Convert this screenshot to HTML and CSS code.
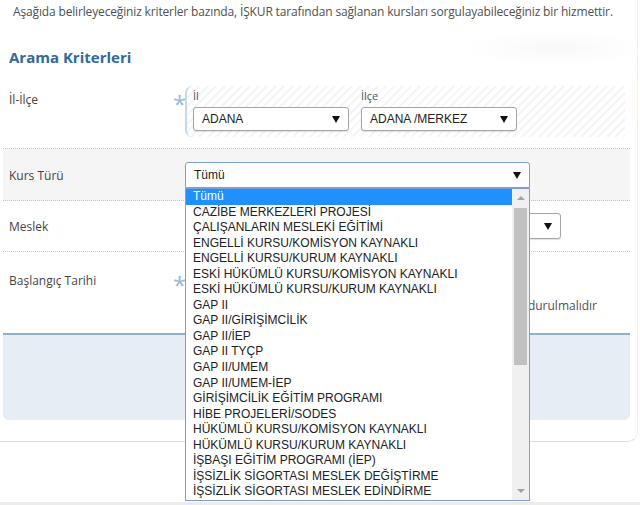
FILE: index.html
```html
<!DOCTYPE html>
<html lang="tr">
<head>
    <meta charset="UTF-8">
    <title>Kurs Sorgulama</title>
    <link rel="stylesheet" href="styles.css">
</head>
<body>
<div class="page">
    <p class="intro">Aşağıda belirleyeceğiniz kriterler bazında, İŞKUR tarafından sağlanan kursları sorgulayabileceğiniz bir hizmettir.</p>

    <h3 class="criteria-title">Arama Kriterleri</h3>

    <div class="form-row row-city">
        <div class="row-label">İl-İlçe</div>
        <div class="req">*</div>
        <div class="row-field">
            <div class="pair-box">
                <div class="pair-item">
                    <div class="small-label">İl</div>
                    <div class="select-box select-city">ADANA<span class="arrow"></span></div>
                </div>
                <div class="pair-item">
                    <div class="small-label">İlçe</div>
                    <div class="select-box select-city">ADANA /MERKEZ<span class="arrow"></span></div>
                </div>
            </div>
        </div>
    </div>

    <div class="form-row row-alt">
        <div class="row-label">Kurs Türü</div>
        <div class="req"></div>
        <div class="row-field">
            <div class="select-box select-course focused">Tümü<span class="arrow"></span>
                <!-- open dropdown -->
                <div class="dropdown">
                    <ul class="options">
                        <li class="selected">Tümü</li>
                        <li>CAZİBE MERKEZLERİ PROJESİ</li>
                        <li>ÇALIŞANLARIN MESLEKİ EĞİTİMİ</li>
                        <li>ENGELLİ KURSU/KOMİSYON KAYNAKLI</li>
                        <li>ENGELLİ KURSU/KURUM KAYNAKLI</li>
                        <li>ESKİ HÜKÜMLÜ KURSU/KOMİSYON KAYNAKLI</li>
                        <li>ESKİ HÜKÜMLÜ KURSU/KURUM KAYNAKLI</li>
                        <li>GAP II</li>
                        <li>GAP II/GİRİŞİMCİLİK</li>
                        <li>GAP II/İEP</li>
                        <li>GAP II TYÇP</li>
                        <li>GAP II/UMEM</li>
                        <li>GAP II/UMEM-İEP</li>
                        <li>GİRİŞİMCİLİK EĞİTİM PROGRAMI</li>
                        <li>HİBE PROJELERİ/SODES</li>
                        <li>HÜKÜMLÜ KURSU/KOMİSYON KAYNAKLI</li>
                        <li>HÜKÜMLÜ KURSU/KURUM KAYNAKLI</li>
                        <li>İŞBAŞI EĞİTİM PROGRAMI (İEP)</li>
                        <li>İŞSİZLİK SİGORTASI MESLEK DEĞİŞTİRME</li>
                        <li>İŞSİZLİK SİGORTASI MESLEK EDİNDİRME</li>
                    </ul>
                    <div class="scrollbar">
                        <span class="scroll-up"></span>
                        <span class="scroll-thumb"></span>
                        <span class="scroll-down"></span>
                    </div>
                </div>
            </div>
        </div>
    </div>

    <div class="form-row">
        <div class="row-label">Meslek</div>
        <div class="req"></div>
        <div class="row-field">
            <div class="select-box select-job"><span class="arrow"></span></div>
        </div>
    </div>

    <div class="form-row row-date">
        <div class="row-label">Başlangıç Tarihi</div>
        <div class="req">*</div>
        <div class="row-field">
            <div class="date-note">durulmalıdır</div>
        </div>
    </div>

    <div class="actions"></div>
</div>
<div class="footer"></div>
</body>
</html>
```

FILE: styles.css
```css
body {
    margin: 0;
    font-family: "Open Sans", "Noto Sans", sans-serif;
    font-size: 12px;
    color: #505050;
    background-color: #fff;
    background-image:
        radial-gradient(ellipse 90px 18px at 555px 48px, rgba(200, 200, 200, 0.12), rgba(255, 255, 255, 0)),
        radial-gradient(circle 40px at 668px 100px, rgba(255, 232, 150, 0.3), rgba(255, 255, 255, 0));
    background-repeat: no-repeat;
}

.page {
    width: 627px;
    padding: 0 7px 21px 3px;
    border-right: 1px solid #eef2f5;
    border-bottom: 1px solid #d8e1e9;
    border-bottom-right-radius: 10px;
}

.intro {
    margin: 0;
    padding: 4px 0 0 10px;
    line-height: 16px;
    letter-spacing: -0.15px;
}

.criteria-title {
    margin: 27px 0 11px;
    padding-left: 6px;
    font-size: 15px;
    line-height: 20px;
    color: #2f6a9a;
}

.form-row {
    display: flex;
    align-items: flex-start;
    padding: 12px 0;
    border-bottom: 1px dotted #c8c8c8;
}

.row-city {
    padding: 8px 0 11px;
}

.row-alt {
    padding: 13px 0 12px;
    background-color: #f5f5f5;
}

.row-date {
    height: 81px;
    padding: 0;
    border-bottom: none;
}

.row-label {
    width: 164px;
    padding: 6px 0 0 6px;
    line-height: 16px;
    color: #444;
}

.row-date .row-label {
    margin-top: 15px;
}

.req {
    width: 12px;
    padding-top: 7px;
    font-size: 24px;
    line-height: 22px;
    color: #98b9d6;
}

.row-date .req {
    margin-top: 15px;
}

.row-field {
    flex: 1;
}

.pair-box {
    display: flex;
    gap: 12px;
    width: 432px;
    height: 51px;
    padding-left: 6px;
    border-left: 2px solid #c7d8e8;
    border-radius: 7px 0 0 7px;
    background: repeating-linear-gradient(-45deg, #f3f5f7 0 2px, #fff 2px 6px);
}

.small-label {
    padding-top: 3px;
    height: 18px;
    font-size: 11px;
    line-height: 14px;
    color: #555;
}

.select-box {
    position: relative;
    box-sizing: border-box;
    height: 26px;
    padding-left: 8px;
    border: 1px solid #a6a6a6;
    border-radius: 3px;
    background: #fff;
    font-family: "Liberation Sans", Arial, sans-serif;
    font-size: 12px;
    line-height: 24px;
    color: #222;
    box-shadow: 0 1px 1px rgba(0, 0, 0, 0.12);
}

.select-city {
    width: 156px;
    height: 24px;
    line-height: 22px;
}

.select-course {
    width: 345px;
}

.select-job {
    width: 376px;
}

.focused {
    border-color: #7d9fd3;
    border-radius: 3px 3px 0 0;
    box-shadow: none;
}

.arrow {
    position: absolute;
    right: 8px;
    top: 50%;
    margin-top: -3px;
    border-left: 4px solid transparent;
    border-right: 4px solid transparent;
    border-top: 7px solid #111;
}

.dropdown {
    position: absolute;
    left: -1px;
    top: 25px;
    width: 345px;
    box-sizing: border-box;
    display: flex;
    border: 1px solid #7d9fd3;
    background: #fff;
    z-index: 5;
}

.options {
    flex: 1;
    margin: 0;
    padding: 0;
    list-style: none;
    line-height: 15.55px;
    color: #222;
}

.options li {
    padding-left: 7px;
    white-space: nowrap;
}

.options li.selected {
    background-color: #1e90ff;
    color: #fff;
}

.scrollbar {
    position: relative;
    width: 17px;
    background-color: #f0f0f0;
}

.scroll-up,
.scroll-down {
    position: absolute;
    left: 5px;
    border-left: 4px solid transparent;
    border-right: 4px solid transparent;
}

.scroll-up {
    top: 7px;
    border-bottom: 4px solid #a3a3a3;
}

.scroll-down {
    bottom: 7px;
    border-top: 4px solid #a3a3a3;
}

.scroll-thumb {
    position: absolute;
    left: 2px;
    top: 19px;
    width: 13px;
    height: 157px;
    background-color: #c1c1c1;
}

.date-note {
    margin-top: 46px;
    padding-right: 33px;
    text-align: right;
    line-height: 16px;
}

.actions {
    height: 85px;
    border-top: 2px solid #8fb0ce;
    border-radius: 0 0 6px 6px;
    background-color: #e6edf4;
}

.footer {
    height: 4px;
    margin-top: 60px;
    background-color: #ececec;
}
```
